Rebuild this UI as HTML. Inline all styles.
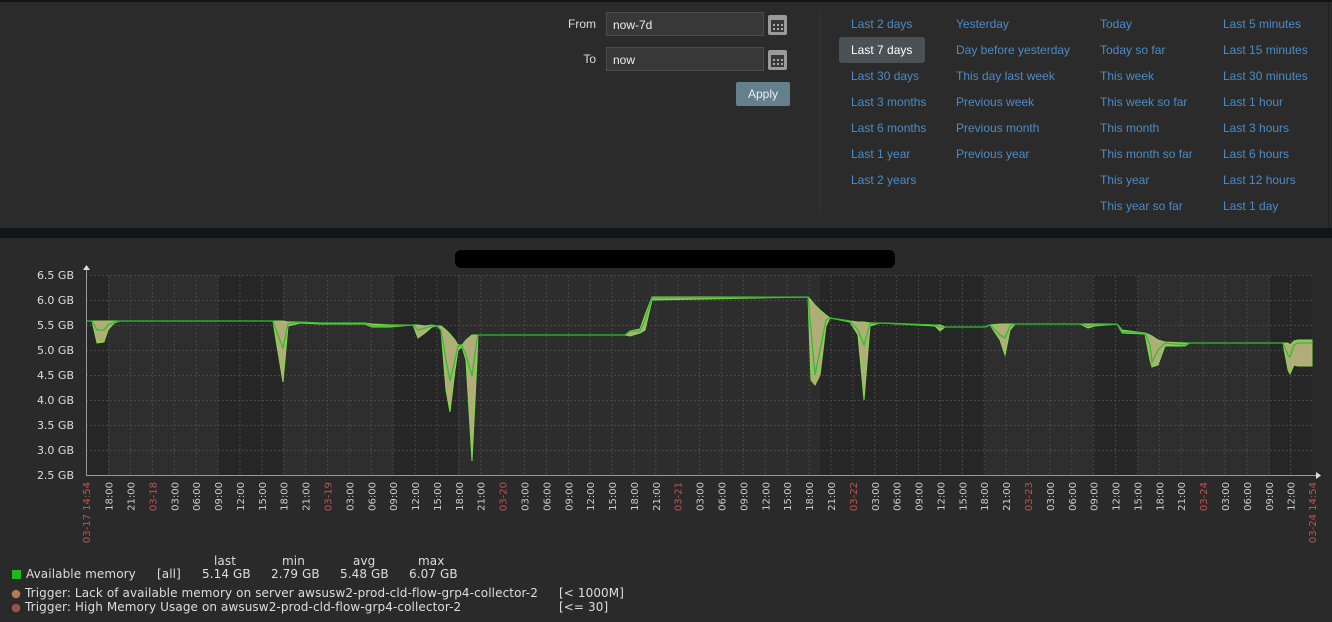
<!DOCTYPE html>
<html><head><meta charset="utf-8"><style>
*{margin:0;padding:0;box-sizing:border-box}
body{width:1332px;height:622px;background:#2a2a2a;overflow:hidden;position:relative;font-family:"Liberation Sans",Arial,sans-serif}
#top{position:absolute;left:0;top:2px;width:1329px;height:226px;background:#2b2b2b;border-right:1px solid #222}
#strip{position:absolute;left:0;top:0;width:1332px;height:2px;background:#151515}
#sep{position:absolute;left:0;top:228px;width:1332px;height:10px;background:#141517}
.lbl{position:absolute;color:#ddd;font-size:12px;text-align:right;width:40px}
.inp{position:absolute;left:606px;width:158px;height:24px;background:#383838;border:1px solid #4c4c4c;color:#eee;font-size:12px;padding:5px 6px}
.cal{position:absolute;left:768px;width:19px;height:20px;background:#9a9a9a;border-radius:2px}
.cal i{position:absolute;left:3px;top:5px;width:13px;height:12px;background:#383838}
.cal b{position:absolute;width:2px;height:2px;background:#aaa}
#apply{position:absolute;left:736px;top:82px;width:54px;height:24px;background:#647f8e;border-radius:2px;color:#eee;font-size:12px;text-align:center;line-height:24px}
#div{position:absolute;left:820px;top:10px;width:1px;height:205px;background:#333}
.lk{position:absolute;color:#4b8bc6;font-size:12px;white-space:nowrap}
#sel{position:absolute;left:839px;top:37px;width:86px;height:26px;background:#4a5256;border-radius:3px}
.lg{position:absolute;font-family:"DejaVu Sans",sans-serif;font-size:12px;color:#ddd;white-space:nowrap;letter-spacing:0.1px}
</style></head><body>
<div id="strip"></div>
<div id="top"></div>
<div class="lbl" style="left:556px;top:17px">From</div>
<div class="lbl" style="left:556px;top:52px">To</div>
<div class="inp" style="top:12px">now-7d</div>
<div class="inp" style="top:47px">now</div>
<div class="cal" style="top:15px"><i></i><b style="left:5px;top:9px"></b><b style="left:9px;top:9px"></b><b style="left:13px;top:9px"></b><b style="left:5px;top:13px"></b><b style="left:9px;top:13px"></b><b style="left:13px;top:13px"></b></div>
<div class="cal" style="top:50px"><i></i><b style="left:5px;top:9px"></b><b style="left:9px;top:9px"></b><b style="left:13px;top:9px"></b><b style="left:5px;top:13px"></b><b style="left:9px;top:13px"></b><b style="left:13px;top:13px"></b></div>
<div id="apply">Apply</div>
<div id="div"></div>
<div id="sel"></div>
<div class="lk" style="left:851px;top:17px">Last 2 days</div>
<div class="lk" style="left:851px;top:43px;color:#fff">Last 7 days</div>
<div class="lk" style="left:851px;top:69px">Last 30 days</div>
<div class="lk" style="left:851px;top:95px">Last 3 months</div>
<div class="lk" style="left:851px;top:121px">Last 6 months</div>
<div class="lk" style="left:851px;top:147px">Last 1 year</div>
<div class="lk" style="left:851px;top:173px">Last 2 years</div>
<div class="lk" style="left:956px;top:17px">Yesterday</div>
<div class="lk" style="left:956px;top:43px">Day before yesterday</div>
<div class="lk" style="left:956px;top:69px">This day last week</div>
<div class="lk" style="left:956px;top:95px">Previous week</div>
<div class="lk" style="left:956px;top:121px">Previous month</div>
<div class="lk" style="left:956px;top:147px">Previous year</div>
<div class="lk" style="left:1100px;top:17px">Today</div>
<div class="lk" style="left:1100px;top:43px">Today so far</div>
<div class="lk" style="left:1100px;top:69px">This week</div>
<div class="lk" style="left:1100px;top:95px">This week so far</div>
<div class="lk" style="left:1100px;top:121px">This month</div>
<div class="lk" style="left:1100px;top:147px">This month so far</div>
<div class="lk" style="left:1100px;top:173px">This year</div>
<div class="lk" style="left:1100px;top:199px">This year so far</div>
<div class="lk" style="left:1223px;top:17px">Last 5 minutes</div>
<div class="lk" style="left:1223px;top:43px">Last 15 minutes</div>
<div class="lk" style="left:1223px;top:69px">Last 30 minutes</div>
<div class="lk" style="left:1223px;top:95px">Last 1 hour</div>
<div class="lk" style="left:1223px;top:121px">Last 3 hours</div>
<div class="lk" style="left:1223px;top:147px">Last 6 hours</div>
<div class="lk" style="left:1223px;top:173px">Last 12 hours</div>
<div class="lk" style="left:1223px;top:199px">Last 1 day</div>
<div id="sep"></div>

<svg style="position:absolute;left:0;top:238px" width="1332" height="384" viewBox="0 238 1332 384">
<defs>
<pattern id="vg" patternUnits="userSpaceOnUse" x="108.1" y="0" width="21.89" height="4"><rect x="0" y="0" width="1" height="2" fill="#474747"/></pattern>
</defs>
<rect x="455" y="250" width="440" height="18" rx="6" fill="#000"/>
<rect x="86" y="275" width="1226" height="200" fill="#262626"/>
<rect x="108" y="275" width="110" height="200" fill="#2e2e2e"/>
<rect x="283" y="275" width="110" height="200" fill="#2e2e2e"/>
<rect x="458" y="275" width="362" height="200" fill="#2d2d2d"/>
<rect x="985" y="275" width="108" height="200" fill="#2e2e2e"/>
<rect x="1138" y="275" width="132" height="200" fill="#2e2e2e"/>
<rect x="108" y="275" width="1204" height="200" fill="url(#vg)"/>
<g stroke="#474747" stroke-dasharray="2,2" stroke-width="1">
<line x1="86" y1="275.5" x2="1312" y2="275.5"/><line x1="86" y1="300.5" x2="1312" y2="300.5"/><line x1="86" y1="325.5" x2="1312" y2="325.5"/><line x1="86" y1="350.5" x2="1312" y2="350.5"/><line x1="86" y1="375.5" x2="1312" y2="375.5"/><line x1="86" y1="400.5" x2="1312" y2="400.5"/><line x1="86" y1="425.5" x2="1312" y2="425.5"/><line x1="86" y1="450.5" x2="1312" y2="450.5"/>
</g>
<polygon fill="#b2ad78" stroke="#7ddc4a" stroke-width="1" points="86,321 92,321 97,321 104,321 108,321 114,321 120,321 273,321 276,321 283,321 288,322 300,322 320,323 365,323 372,324 390,325 413,325 418,325 425,326 432,325 437,326 441,326 446,330 450,334 455,340 458,345 462,345 466,340 472,335 477,335 478,335 625,335 630,331 640,329 645,315 652,297 808,297 811,300 815,305 820,310 826,315 830,318 850,321 858,322 864,322 870,323 880,323 935,325 940,325 945,327 985,327 990,325 1000,324 1005,324 1010,324 1015,324 1080,324 1088,324 1095,324 1117,324 1122,330 1145,333 1150,335 1152,336 1158,340 1165,342 1185,343 1190,343 1283,343 1288,343 1290,345 1294,341 1298,340 1312,340 1312,366 1298,366 1294,365 1290,374 1288,370 1283,343 1190,343 1185,346 1165,346 1158,365 1152,367 1150,360 1145,334 1122,333 1117,324 1095,326 1088,328 1080,324 1015,324 1010,330 1005,355 1000,340 990,325 985,327 945,327 940,331 935,326 880,323 870,326 864,400 858,335 850,322 830,318 826,326 820,375 815,385 811,380 808,297 652,300 645,330 640,333 630,336 625,335 478,335 477,360 472,461 466,360 462,347 458,350 455,370 450,412 446,390 441,330 437,326 432,327 425,333 418,338 413,325 390,327 372,327 365,324 320,324 300,323 288,326 283,382 276,340 273,321 120,321 114,323 108,330 104,342 97,343 92,321 86,321"/>
<polyline fill="none" stroke="#2fbf2f" stroke-width="1.3" points="86,321 92,321 97,330 104,330 108,325 114,322 120,321 273,321 276,330 283,348 288,324 300,322 320,323 365,323 372,326 390,326 413,325 418,330 425,328 432,326 437,326 441,330 446,360 450,381 455,360 458,346 462,346 466,355 472,376 477,340 478,335 625,335 630,331 640,331 645,320 652,298 808,297 811,330 815,375 820,350 826,320 830,318 850,321 858,330 864,345 870,324 880,323 935,325 940,327 945,327 985,327 990,325 1000,335 1005,338 1010,326 1015,324 1080,324 1088,326 1095,325 1117,324 1122,332 1145,333 1150,345 1152,362 1158,350 1165,343 1185,345 1190,343 1283,343 1288,355 1290,357 1294,345 1298,343 1312,343"/>
<g stroke="#999" stroke-width="1"><line x1="86.5" y1="270" x2="86.5" y2="476"/><line x1="86" y1="475.5" x2="1316" y2="475.5"/></g>
<polygon points="83,270 86.5,265 90,270" fill="#ddd"/><polygon points="1316,472 1321,475.5 1316,479" fill="#ddd"/>
<g font-family="DejaVu Sans,sans-serif" font-size="11" fill="#ddd" text-anchor="end">
<text x="74" y="279">6.5 GB</text><text x="74" y="304">6.0 GB</text><text x="74" y="329">5.5 GB</text><text x="74" y="354">5.0 GB</text><text x="74" y="379">4.5 GB</text><text x="74" y="404">4.0 GB</text><text x="74" y="429">3.5 GB</text><text x="74" y="454">3.0 GB</text><text x="74" y="479">2.5 GB</text>
</g>
<g font-family="DejaVu Sans,sans-serif" font-size="10" fill="#ccc" text-anchor="end">
<text transform="translate(90,482) rotate(-90)" fill="#c94f4f">03-17 14:54</text>
<text transform="translate(112.6,482) rotate(-90)">18:00</text>
<text transform="translate(134.5,482) rotate(-90)">21:00</text>
<text transform="translate(156.4,482) rotate(-90)" fill="#c94f4f">03-18</text>
<text transform="translate(178.3,482) rotate(-90)">03:00</text>
<text transform="translate(200.2,482) rotate(-90)">06:00</text>
<text transform="translate(222.1,482) rotate(-90)">09:00</text>
<text transform="translate(244,482) rotate(-90)">12:00</text>
<text transform="translate(265.8,482) rotate(-90)">15:00</text>
<text transform="translate(287.7,482) rotate(-90)">18:00</text>
<text transform="translate(309.6,482) rotate(-90)">21:00</text>
<text transform="translate(331.5,482) rotate(-90)" fill="#c94f4f">03-19</text>
<text transform="translate(353.4,482) rotate(-90)">03:00</text>
<text transform="translate(375.3,482) rotate(-90)">06:00</text>
<text transform="translate(397.2,482) rotate(-90)">09:00</text>
<text transform="translate(419.1,482) rotate(-90)">12:00</text>
<text transform="translate(441,482) rotate(-90)">15:00</text>
<text transform="translate(462.9,482) rotate(-90)">18:00</text>
<text transform="translate(484.7,482) rotate(-90)">21:00</text>
<text transform="translate(506.6,482) rotate(-90)" fill="#c94f4f">03-20</text>
<text transform="translate(528.5,482) rotate(-90)">03:00</text>
<text transform="translate(550.4,482) rotate(-90)">06:00</text>
<text transform="translate(572.3,482) rotate(-90)">09:00</text>
<text transform="translate(594.2,482) rotate(-90)">12:00</text>
<text transform="translate(616.1,482) rotate(-90)">15:00</text>
<text transform="translate(638,482) rotate(-90)">18:00</text>
<text transform="translate(659.9,482) rotate(-90)">21:00</text>
<text transform="translate(681.7,482) rotate(-90)" fill="#c94f4f">03-21</text>
<text transform="translate(703.6,482) rotate(-90)">03:00</text>
<text transform="translate(725.5,482) rotate(-90)">06:00</text>
<text transform="translate(747.4,482) rotate(-90)">09:00</text>
<text transform="translate(769.3,482) rotate(-90)">12:00</text>
<text transform="translate(791.2,482) rotate(-90)">15:00</text>
<text transform="translate(813.1,482) rotate(-90)">18:00</text>
<text transform="translate(835,482) rotate(-90)">21:00</text>
<text transform="translate(856.9,482) rotate(-90)" fill="#c94f4f">03-22</text>
<text transform="translate(878.8,482) rotate(-90)">03:00</text>
<text transform="translate(900.6,482) rotate(-90)">06:00</text>
<text transform="translate(922.5,482) rotate(-90)">09:00</text>
<text transform="translate(944.4,482) rotate(-90)">12:00</text>
<text transform="translate(966.3,482) rotate(-90)">15:00</text>
<text transform="translate(988.2,482) rotate(-90)">18:00</text>
<text transform="translate(1010.1,482) rotate(-90)">21:00</text>
<text transform="translate(1032,482) rotate(-90)" fill="#c94f4f">03-23</text>
<text transform="translate(1053.9,482) rotate(-90)">03:00</text>
<text transform="translate(1075.8,482) rotate(-90)">06:00</text>
<text transform="translate(1097.6,482) rotate(-90)">09:00</text>
<text transform="translate(1119.5,482) rotate(-90)">12:00</text>
<text transform="translate(1141.4,482) rotate(-90)">15:00</text>
<text transform="translate(1163.3,482) rotate(-90)">18:00</text>
<text transform="translate(1185.2,482) rotate(-90)">21:00</text>
<text transform="translate(1207.1,482) rotate(-90)" fill="#c94f4f">03-24</text>
<text transform="translate(1229,482) rotate(-90)">03:00</text>
<text transform="translate(1250.9,482) rotate(-90)">06:00</text>
<text transform="translate(1272.8,482) rotate(-90)">09:00</text>
<text transform="translate(1294.7,482) rotate(-90)">12:00</text>
<text transform="translate(1316,482) rotate(-90)" fill="#c94f4f">03-24 14:54</text>
</g>
<rect x="12" y="570" width="9" height="9" fill="#1fb81f"/>
<circle cx="16" cy="594" r="4.3" fill="#b07a55"/>
<circle cx="16" cy="608" r="4.3" fill="#a0504a"/>
</svg>
<div class="lg" style="left:214px;top:554px">last</div>
<div class="lg" style="left:282px;top:554px">min</div>
<div class="lg" style="left:353px;top:554px">avg</div>
<div class="lg" style="left:418px;top:554px">max</div>
<div class="lg" style="left:26px;top:567px">Available memory</div>
<div class="lg" style="left:157px;top:567px">[all]</div>
<div class="lg" style="left:202px;top:567px">5.14 GB</div>
<div class="lg" style="left:271px;top:567px">2.79 GB</div>
<div class="lg" style="left:340px;top:567px">5.48 GB</div>
<div class="lg" style="left:409px;top:567px">6.07 GB</div>
<div class="lg" style="left:25px;top:586px">Trigger: Lack of available memory on server awsusw2-prod-cld-flow-grp4-collector-2</div>
<div class="lg" style="left:559px;top:586px">[&lt; 1000M]</div>
<div class="lg" style="left:25px;top:600px">Trigger: High Memory Usage on awsusw2-prod-cld-flow-grp4-collector-2</div>
<div class="lg" style="left:559px;top:600px">[&lt;= 30]</div>
</body></html>
